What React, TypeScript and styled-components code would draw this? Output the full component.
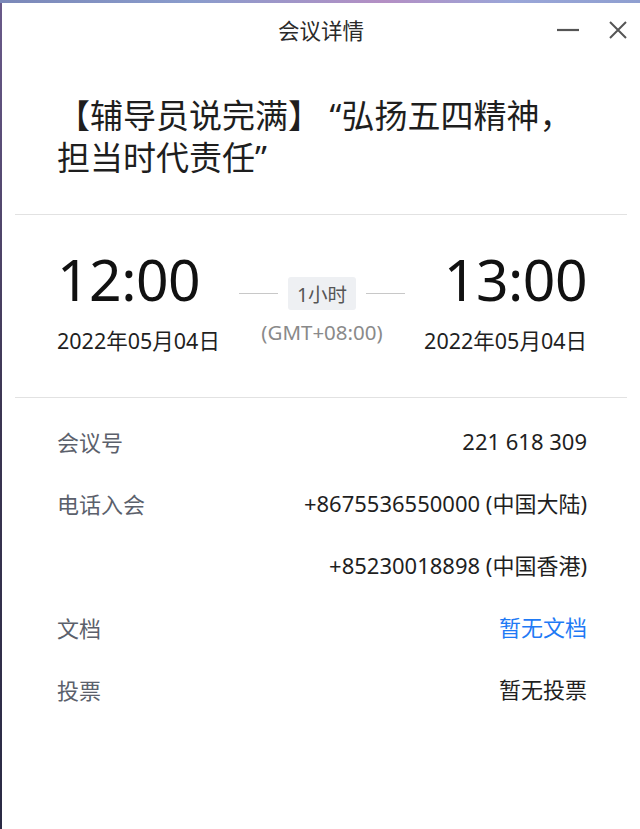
import React from "react";
import styled, { createGlobalStyle } from "styled-components";

const GlobalStyle = createGlobalStyle`
  html, body {
    margin: 0;
    padding: 0;
    background: #ffffff;
  }
  body {
    font-family: "Noto Sans", "Noto Sans CJK SC", sans-serif;
    color: #1f1f1f;
  }
  * { box-sizing: border-box; }
`;

const Frame = styled.div`
  width: 640px;
  height: 829px;
  overflow: hidden;
  padding: 3px 0 0 2px;
  background:
    linear-gradient(90deg, #7b88b8 0%, #8a9ccc 30%, #b48fc4 60%, #9aa6d8 80%, #8f9fd0 100%) top / 100% 3px no-repeat,
    linear-gradient(180deg, #6a5a8a 0%, #3b3552 50%, #2a2a44 100%) left / 2px 100% no-repeat;
`;

const Window = styled.div`
  background: #ffffff;
  height: 826px;
  display: flex;
  flex-direction: column;
`;

const TitleBar = styled.div`
  height: 54px;
  display: grid;
  grid-template-columns: 1fr auto 1fr;
  align-items: center;
`;

const WindowTitle = styled.div`
  font-family: "Noto Sans CJK SC", sans-serif;
  font-size: 21.5px;
  line-height: 30px;
  color: #2a2a2a;
  grid-column: 2;
`;

const Controls = styled.div`
  grid-column: 3;
  justify-self: end;
  display: flex;
  align-items: center;
  gap: 22px;
  padding-right: 8px;
`;

const ControlButton = styled.button`
  width: 28px;
  height: 28px;
  padding: 0;
  border: none;
  background: transparent;
  display: flex;
  align-items: center;
  justify-content: center;
  color: #555;
`;

const Header = styled.div`
  padding: 38px 53px 35px 55px;
`;

const MeetingTitle = styled.h1`
  margin: 0;
  font-family: "Noto Sans", "Noto Sans CJK SC", sans-serif;
  font-weight: 400;
  font-size: 33px;
  line-height: 42px;
  color: #1e1e1e;
`;

const TitleLine = styled.span`
  display: block;
  white-space: nowrap;
`;

const Divider = styled.div`
  height: 1px;
  background: #e2e2e2;
  margin: 0 13px;
`;

const TimeSection = styled.div`
  display: grid;
  grid-template-columns: auto 1fr auto;
  align-items: start;
  padding: 32px 53px 42px 55px;
`;

const TimeBlock = styled.div<{ $align: "left" | "right" }>`
  display: flex;
  flex-direction: column;
  align-items: ${(p) => (p.$align === "left" ? "flex-start" : "flex-end")};
`;

const BigTime = styled.div`
  font-family: "Noto Sans", sans-serif;
  font-size: 57px;
  line-height: 64px;
  color: #111;
  letter-spacing: -0.5px;
`;

const DateText = styled.div`
  font-family: "Noto Sans", "Noto Sans CJK SC", sans-serif;
  font-size: 21.5px;
  line-height: 28px;
  margin-top: 16px;
  color: #1f1f1f;
`;

const Middle = styled.div`
  display: flex;
  flex-direction: column;
  align-items: center;
  padding-top: 30px;
`;

const DurationRow = styled.div`
  display: flex;
  align-items: center;
  gap: 10px;
`;

const Line = styled.div`
  width: 39px;
  height: 1px;
  background: #c8c8c8;
`;

const Badge = styled.div`
  background: #eef0f3;
  border-radius: 3px;
  padding: 0 9px;
  height: 33px;
  display: flex;
  align-items: center;
  font-family: "Noto Sans", "Noto Sans CJK SC", sans-serif;
  font-size: 19.5px;
  color: #555;
`;

const Zone = styled.div`
  font-family: "Noto Sans", sans-serif;
  font-size: 20.5px;
  line-height: 28px;
  color: #8a8a8a;
  margin-top: 8px;
`;

const InfoList = styled.div`
  padding: 12px 53px 0 55px;
  display: flex;
  flex-direction: column;
`;

const InfoRow = styled.div`
  display: flex;
  justify-content: space-between;
  align-items: flex-start;
`;

const Label = styled.div`
  font-family: "Noto Sans CJK SC", sans-serif;
  font-size: 22px;
  line-height: 62px;
  color: #5b606b;
`;

const Values = styled.div`
  display: flex;
  flex-direction: column;
  align-items: flex-end;
`;

const Value = styled.div<{ $link?: boolean }>`
  font-family: "Noto Sans", "Noto Sans CJK SC", sans-serif;
  font-size: 22px;
  line-height: 62px;
  color: ${(p) => (p.$link ? "#1f7af5" : "#1f1f1f")};
  cursor: ${(p) => (p.$link ? "pointer" : "default")};
`;

export default function App() {
  return (
    <>
      <GlobalStyle />
      <Frame>
        <Window>
          <TitleBar>
            <WindowTitle>会议详情</WindowTitle>
            <Controls>
              <ControlButton aria-label="minimize">
                <svg width="22" height="22" viewBox="0 0 22 22">
                  <line x1="0" y1="11" x2="22" y2="11" stroke="#555" strokeWidth="2.2" />
                </svg>
              </ControlButton>
              <ControlButton aria-label="close">
                <svg width="20" height="20" viewBox="0 0 20 20">
                  <path d="M2 2 L18 18 M18 2 L2 18" stroke="#555" strokeWidth="2" fill="none" />
                </svg>
              </ControlButton>
            </Controls>
          </TitleBar>

          <Header>
            <MeetingTitle>
              <TitleLine>【辅导员说完满】 “弘扬五四精神，</TitleLine>
              <TitleLine>担当时代责任”</TitleLine>
            </MeetingTitle>
          </Header>

          <Divider />

          <TimeSection>
            <TimeBlock $align="left">
              <BigTime>12:00</BigTime>
              <DateText>2022年05月04日</DateText>
            </TimeBlock>
            <Middle>
              <DurationRow>
                <Line />
                <Badge>1小时</Badge>
                <Line />
              </DurationRow>
              <Zone>(GMT+08:00)</Zone>
            </Middle>
            <TimeBlock $align="right">
              <BigTime>13:00</BigTime>
              <DateText>2022年05月04日</DateText>
            </TimeBlock>
          </TimeSection>

          <Divider />

          <InfoList>
            <InfoRow>
              <Label>会议号</Label>
              <Values>
                <Value>221 618 309</Value>
              </Values>
            </InfoRow>
            <InfoRow>
              <Label>电话入会</Label>
              <Values>
                <Value>+8675536550000 (中国大陆)</Value>
                <Value>+85230018898 (中国香港)</Value>
              </Values>
            </InfoRow>
            <InfoRow>
              <Label>文档</Label>
              <Values>
                <Value $link>暂无文档</Value>
              </Values>
            </InfoRow>
            <InfoRow>
              <Label>投票</Label>
              <Values>
                <Value>暂无投票</Value>
              </Values>
            </InfoRow>
          </InfoList>
        </Window>
      </Frame>
    </>
  );
}
